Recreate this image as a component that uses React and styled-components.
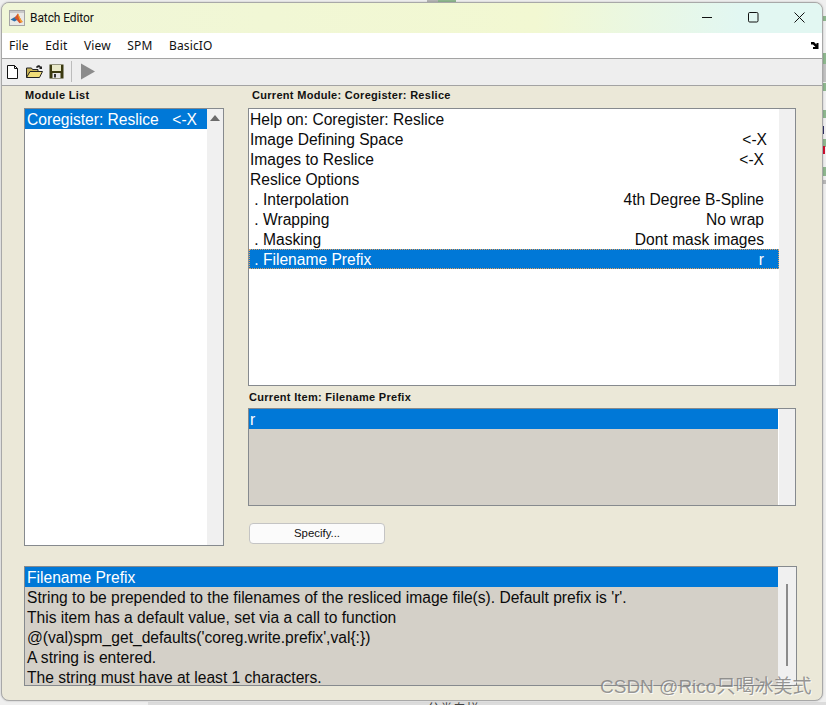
import React from 'react';
import styled, { createGlobalStyle } from 'styled-components';

const Global = createGlobalStyle`
  html, body { margin: 0; padding: 0; background: #f1f1f1; overflow: hidden; }
  body { font-family: "Liberation Sans", Arial, sans-serif; color: #000; }
`;

const Desktop = styled.div`
  width: 826px; height: 705px; position: relative; overflow: hidden; padding: 2px 3px 3px 1px; box-sizing: border-box;
  background: #efefef;
`;
const Backdrop = styled.svg` position: absolute; left: 0; top: 0; `;
const BehindText = styled.div`
  position: absolute; left: 427px; top: 698px; font: 13px "Noto Sans CJK SC", sans-serif; color: #444; white-space: nowrap;
`;
const Win = styled.div`
  position: relative; height: 699px; border-radius: 8px; overflow: hidden; display: flex; flex-direction: column;
  background: #ebe8d8; border: 1px solid #a8a8a8; box-sizing: border-box; box-shadow: 0 0 2px rgba(0,0,0,.25);
`;
const TitleBar = styled.div`
  height: 30px; flex: none; display: flex; align-items: center; padding-bottom: 1px; box-sizing: border-box;
  background: linear-gradient(90deg, #f0f6d8 0%, #f2f8d2 65%, #e2f7f2 90%);
  font-family: "Roboto", "Noto Sans", sans-serif; color: #111;
`;
const AppIcon = styled.svg` width: 16px; height: 16px; margin: 0 5px 0 7px; flex: none; `;
const TitleText = styled.span` flex: 1; font-size: 12px; letter-spacing: -.1px; `;
const WinBtn = styled.button`
  width: 46px; height: 30px; border: 0; background: none; padding: 0; display: grid; place-items: center;
`;
const MenuBar = styled.div`
  height: 26px; flex: none; background: #fff; border-bottom: 1px solid #a3a3a3; display: flex; align-items: center; padding-bottom: 1px;
  font: 12px "Noto Sans", "Open Sans", sans-serif; letter-spacing: .15px; color: #111; padding-left: 7px; box-sizing: border-box;
`;
const Menu = styled.span` margin-right: 16.5px; `;
const MenuArrow = styled.svg` margin-left: auto; margin-right: 3px; `;
const ToolBar = styled.div`
  height: 27px; flex: none; background: #eeeeee; border-bottom: 1px solid #a3a3a3; display: flex; align-items: center; padding: 0 0 1px 3px; gap: 6px; box-sizing: border-box;
`;
const ToolSep = styled.div` width: 1px; height: 21px; background: #bcbcbc; margin: 0 2px 0 1px; `;
const Body = styled.div`
  flex: 1; display: flex; flex-direction: column; padding: 0 25px 0 22px;
`;
const Columns = styled.div` display: flex; gap: 24px; `;
const LeftCol = styled.div` width: 200px; flex: none; display: flex; flex-direction: column; `;
const RightCol = styled.div` width: 548px; flex: none; display: flex; flex-direction: column; `;
const Label = styled.div`
  height: 22px; font: bold 11px "Liberation Sans", Arial, sans-serif; letter-spacing: .3px;
  padding: 0 0 ${p => p.$pb ?? 0}px ${p => p.$x || 0}px; display: flex; align-items: center; color: #111; box-sizing: border-box;
`;
const List = styled.div`
  height: ${p => p.$h}px; box-sizing: border-box; border: 1px solid #868a8e; background: ${p => p.$bg || '#fff'}; display: flex; overflow: hidden; flex: none;
`;
const Rows = styled.div` flex: 1; min-width: 0; `;
const Row = styled.div`
  height: 20px; display: flex; justify-content: space-between; align-items: center; box-sizing: border-box; white-space: nowrap;
  font: 15.6px/20px "Liberation Sans", Arial, sans-serif;
  padding: 2px ${p => p.$pr ?? 15}px 0 ${p => p.$pl ?? 1}px;
  color: ${p => p.$sel ? '#fff' : '#0b0b0b'};
  background: ${p => p.$sel ? '#0078d7' : 'transparent'};
  ${p => p.$focus ? 'outline: 1px dotted #e0a060; outline-offset: -1px;' : ''}
`;
const Scroll = styled.div`
  width: ${p => p.$w || 16}px; flex: none; background: #f0f0f0; display: flex; flex-direction: column; align-items: center;
  border-left: ${p => p.$line ? '1px solid #fff' : '0'};
`;
const Up = styled.div`
  margin-top: 6px; width: 0; height: 0; border-left: 5px solid transparent; border-right: 5px solid transparent; border-bottom: 6px solid #6b6b6b;
`;
const Thumb = styled.div` margin-top: 17px; width: 2px; height: 82px; background: #8b8b8b; `;
const ButtonRow = styled.div` padding-top: 17px; `;
const SpecBtn = styled.button`
  width: 136px; height: 21px; margin-left: 1px; border: 1px solid #c4c4c4; border-radius: 4px; background: #fbfbfb; padding: 0 0 1px;
  font: 11.4px "Liberation Sans", Arial, sans-serif; color: #111; display: block;
`;
const Gap = styled.div` height: 20px; `;
const Water = styled.div`
  position: absolute; left: 600px; top: 671px; font: 19px "Liberation Sans", "Noto Sans CJK SC", sans-serif; white-space: nowrap;
  color: rgba(125,125,125,.8); text-shadow: 1px 1px 0 rgba(255,255,255,.75);
`;

const Items = [
  ['Help on: Coregister: Reslice'],
  ['Image Defining Space', '<-X', 12],
  ['Images to Reslice', '<-X', 15],
  ['Reslice Options'],
  ['\u00a0. Interpolation', '4th Degree B-Spline'],
  ['\u00a0. Wrapping', 'No wrap'],
  ['\u00a0. Masking', 'Dont mask images'],
  ['\u00a0. Filename Prefix', 'r', 15, true],
];
const Help = [
  "String to be prepended to the filenames of the resliced image file(s). Default prefix is 'r'.",
  'This item has a default value, set via a call to function',
  "@(val)spm_get_defaults('coreg.write.prefix',val{:})",
  'A string is entered.',
  'The string must have at least 1 characters.',
];
const Strip = [
  [822, 16, 4, 5, '#8fb88f'], [822, 53, 4, 11, '#8fb88f'], [822, 64, 4, 18, '#c2c2c2'], [822, 83, 4, 8, '#8fb88f'],
  [822, 110, 4, 8, '#8fb88f'], [822, 126, 2, 8, '#333366'], [822, 139, 4, 8, '#8fb88f'], [822, 146, 3, 8, '#d01030'],
  [822, 167, 4, 9, '#8fb88f'], [822, 180, 4, 4, '#b8b8b8'], [148, 702, 678, 3, '#dcdcdc'], [427, 0, 11, 3, '#b5b5b5'], [438, 0, 18, 3, '#8fb88f'],
];

const Matlab = () => (
  <AppIcon viewBox="0 0 16 16">
    <rect x=".5" y=".5" width="15" height="15" fill="#e9e9e6" stroke="#a5a5a5" />
    <rect x="1" y="1" width="14" height="2" fill="#c9c9c9" />
    <path d="M1.500 9.500 5 7.500l2-1 2 3-3.500 2z" fill="#2f6ea8" />
    <path d="M5.500 8 8.800 3.500c1 .5 2 5 5 8.500-2 .5-3 1.500-3.500 1-1.500-1.500-2.300-3.500-4.800-5z" fill="#d8562a" />
    <path d="M8.800 3.500c1 .5 2 5 5 8.500l-2 .5c-1.500-3-2.500-5.500-3-9z" fill="#f2a52e" />
  </AppIcon>
);

export default function App() {
  return (
    <Desktop>
      <Global />
      <Backdrop width="826" height="705">
        {Strip.map(([x, y, w, h, c]) => <rect key={`${x}-${y}`} x={x} y={y} width={w} height={h} fill={c} />)}
      </Backdrop>
      <BehindText>分类专栏</BehindText>
      <Win>
        <TitleBar>
          <Matlab />
          <TitleText>Batch Editor</TitleText>
          <WinBtn aria-label="minimize"><svg width="11" height="11" viewBox="0 0 11 11"><path d="M0 5.500h10" stroke="#111" /></svg></WinBtn>
          <WinBtn aria-label="maximize"><svg width="11" height="11" viewBox="0 0 11 11"><rect x=".5" y=".5" width="9.500" height="9.500" rx="1.200" fill="none" stroke="#111" /></svg></WinBtn>
          <WinBtn aria-label="close"><svg width="11" height="11" viewBox="0 0 11 11"><path d="M.5.500l10 10M10.500.500l-10 10" stroke="#111" /></svg></WinBtn>
        </TitleBar>
        <MenuBar>
          <Menu>File</Menu><Menu>Edit</Menu><Menu>View</Menu><Menu>SPM</Menu><Menu>BasicIO</Menu>
          <MenuArrow width="8" height="7" viewBox="0 0 8 7"><path d="M0 0h3l2.500 2.500V1H7.500v6H2V5h2.500L2 2.500H0z" fill="#000" /></MenuArrow>
        </MenuBar>
        <ToolBar>
          <svg width="15" height="16" viewBox="0 0 15 16"><path d="M2.500 1.500h7l3 3v10h-10z" fill="#fff" stroke="#111" /><path d="M9.500 1.500v3h3" fill="none" stroke="#111" /></svg>
          <svg width="17" height="15" viewBox="0 0 17 15"><path d="M.5 13.500V4h5l1 1.500H12V8" fill="#c9b458" stroke="#222" /><path d="M.5 13.500 4 7.500h12.500l-3 6z" fill="#f0dc78" stroke="#222" /><path d="M10 3c1.500-2.500 4-2.500 5 0l1-1v3h-3l1-1c-.8-1-2-1-3 .2" fill="#222" /></svg>
          <svg width="15" height="15" viewBox="0 0 15 15"><rect x=".5" y=".5" width="14" height="14" fill="#3b3a10" /><rect x="3" y="1" width="9" height="6" fill="#e9e9c8" /><rect x="3.500" y="9" width="8" height="5" fill="#e7e7e7" /><rect x="5" y="10" width="2" height="3.500" fill="#333" /></svg>
          <ToolSep />
          <svg width="16" height="17" viewBox="0 0 16 17"><path d="M1 .5 15 8.500 1 16.500z" fill="#8b8b8b" /></svg>
        </ToolBar>
        <Body>
          <Columns>
            <LeftCol>
              <Label $x={1} $pb={5}>Module List</Label>
              <List $h={438}>
                <Rows>
                  <Row $sel $pr={10} $pl={2}><span>Coregister: Reslice</span><span>{'<-X'}</span></Row>
                </Rows>
                <Scroll><Up /></Scroll>
              </List>
            </LeftCol>
            <RightCol>
              <Label $x={4} $pb={5}>Current Module: Coregister: Reslice</Label>
              <List $h={278}>
                <Rows>
                  {Items.map(([a, b, pr, sel]) => (
                    <Row key={a} $sel={sel} $focus={sel} $pr={pr ?? 15}><span>{a}</span>{b && <span>{b}</span>}</Row>
                  ))}
                </Rows>
                <Scroll />
              </List>
              <Label $x={1}>Current Item: Filename Prefix</Label>
              <List $h={98} $bg="#d4d0c8">
                <Rows>
                  <Row $sel $pl={1}><span>r</span></Row>
                </Rows>
                <Scroll $w={16} $line />
              </List>
              <ButtonRow><SpecBtn>Specify...</SpecBtn></ButtonRow>
            </RightCol>
          </Columns>
          <Gap />
          <List $h={120} $bg="#d4d0c8">
            <Rows>
              <Row $sel $pl={2}><span>Filename Prefix</span></Row>
              {Help.map(t => <Row key={t} $pl={2}><span>{t}</span></Row>)}
            </Rows>
            <Scroll $w={18}><Thumb /></Scroll>
          </List>
        </Body>
      </Win>
      <Water>CSDN @Rico只喝冰美式</Water>
    </Desktop>
  );
}
